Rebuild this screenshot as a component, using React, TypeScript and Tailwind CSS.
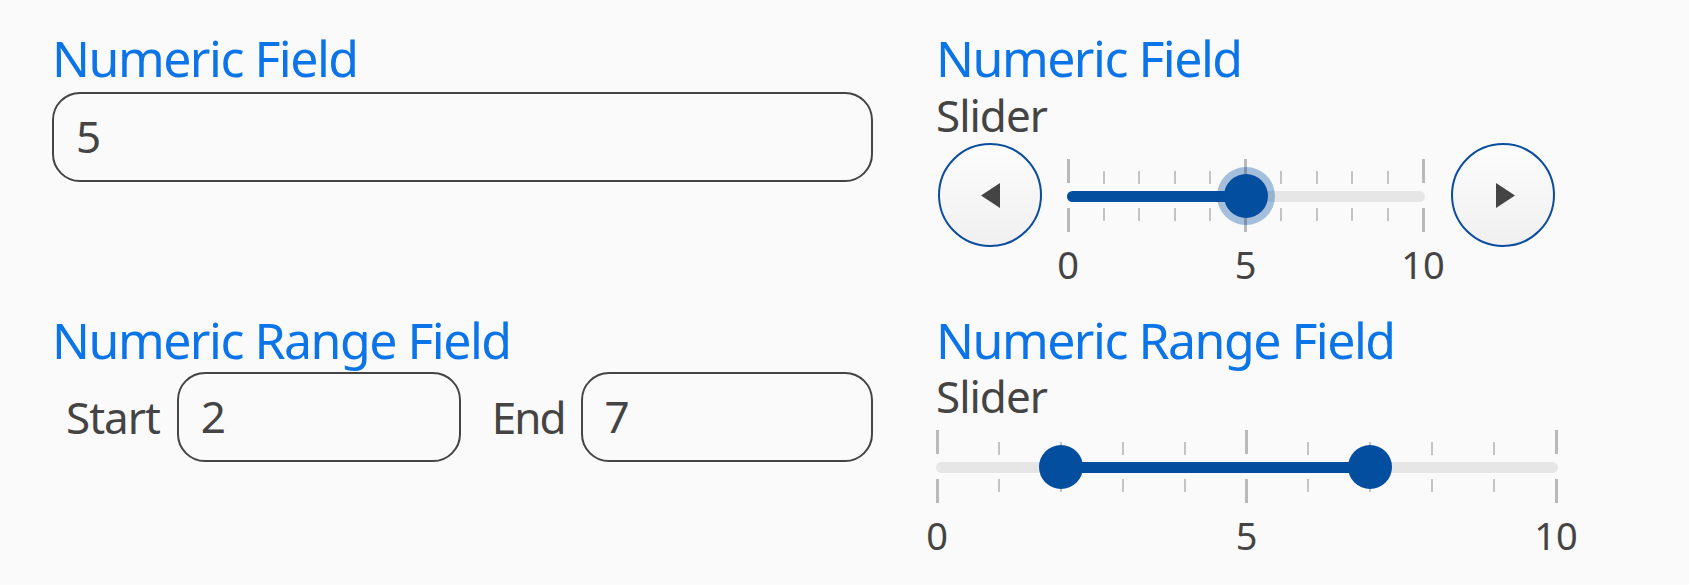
import React from "react";

const BLUE = "#044ea0";

function Ticks({ width, center }: { width: number; center: number }) {
  const items = [];
  for (let i = 0; i <= 10; i++) {
    const major = i % 5 === 0;
    const x = (width * i) / 10;
    const cls = major
      ? "absolute w-[3px] h-[24px] bg-[#b9b9b9]"
      : "absolute w-[2px] h-[13px] bg-[#c4c4c4]";
    const off = major ? 1.5 : 1;
    items.push(
      <React.Fragment key={i}>
        <div className={cls} style={{ left: x - off, top: major ? center - 37 : center - 25 }} />
        <div className={cls} style={{ left: x - off, top: center + 12 }} />
      </React.Fragment>
    );
  }
  return <>{items}</>;
}

function TickLabels({ className }: { className: string }) {
  return (
    <div
      className={
        "flex justify-between -mx-[30px] text-[38px] leading-[44px] text-[#444] " + className
      }
    >
      <span className="w-[60px] text-center">0</span>
      <span className="w-[60px] text-center">5</span>
      <span className="w-[60px] text-center">10</span>
    </div>
  );
}

function Slider({
  width,
  height,
  center,
  values,
  halo,
  labelOffset,
}: {
  width: number;
  height: number;
  center: number;
  values: number[];
  halo?: boolean;
  labelOffset: string;
}) {
  const pos = values.map((v) => (width * v) / 10);
  const fillLeft = values.length === 1 ? -1 : pos[0];
  const fillRight = values.length === 1 ? pos[0] : pos[1];
  return (
    <div className="flex flex-col" style={{ width }}>
      <div className="relative" style={{ width, height }}>
        <Ticks width={width} center={center} />
        <div
          className="absolute h-[11px] rounded-full bg-[#e6e6e6]"
          style={{ left: -1, width: width + 3, top: center - 5.5 }}
        />
        <div
          className="absolute h-[11px] rounded-full"
          style={{
            left: fillLeft,
            width: fillRight - fillLeft,
            top: center - 5.5,
            backgroundColor: BLUE,
          }}
        />
        {pos.map((p, i) => (
          <React.Fragment key={i}>
            {halo && (
              <div
                className="absolute w-[58px] h-[58px] rounded-full bg-[#044ea0]/35"
                style={{ left: p - 29, top: center - 29 }}
              />
            )}
            <div
              className="absolute w-[44px] h-[44px] rounded-full bg-[#044ea0]"
              style={{ left: p - 22, top: center - 22 }}
            />
          </React.Fragment>
        ))}
      </div>
      <TickLabels className={labelOffset} />
    </div>
  );
}

function ArrowButton({ dir }: { dir: "left" | "right" }) {
  return (
    <div className="w-[104px] h-[104px] rounded-full border-2 border-[#0a4c9e] bg-gradient-to-b from-[#fcfcfc] to-[#f0f0f0] flex items-center justify-center shrink-0">
      <svg
        width="20"
        height="25"
        viewBox="0 0 20 25"
        className={dir === "left" ? "ml-[2px]" : "ml-[6px]"}
      >
        {dir === "left" ? (
          <polygon points="19,0 19,25 0,12.5" fill="#444" />
        ) : (
          <polygon points="0,0 0,25 19,12.5" fill="#444" />
        )}
      </svg>
    </div>
  );
}

function Label({ children }: { children: React.ReactNode }) {
  return (
    <div className="text-[50px] leading-[60px] tracking-[-1.5px] text-[#0b74e8] whitespace-nowrap">
      {children}
    </div>
  );
}

function Box({ value, className }: { value: string; className: string }) {
  return (
    <div
      className={
        "h-[90px] rounded-[28px] border-2 border-[#444] flex items-center pl-[22px] text-[44px] text-[#444] " +
        className
      }
    >
      <span className="leading-[60px] -mt-[2px]">{value}</span>
    </div>
  );
}

export default function App() {
  return (
    <div className="w-[1689px] h-[585px] bg-[#fafafa] font-['Noto_Sans',sans-serif] text-[#444] pt-[28px] pl-[52px] grid grid-cols-[821px_621px] grid-rows-[282px_auto] gap-x-[63px]">
      {/* Row 1 left */}
      <div className="flex flex-col">
        <Label>Numeric Field</Label>
        <Box value="5" className="mt-[4px] w-[821px]" />
      </div>
      {/* Row 1 right */}
      <div className="flex flex-col">
        <Label>Numeric Field</Label>
        <div className="mt-[2px] text-[44px] leading-[50px] tracking-[-1px]">Slider</div>
        <div className="mt-[3px] flex items-start ml-[2px]">
          <ArrowButton dir="left" />
          <div className="ml-[26px] mr-[28px]">
            <Slider
              width={355}
              height={104}
              center={53}
              values={[5]}
              halo
              labelOffset="-mt-[5px]"
            />
          </div>
          <ArrowButton dir="right" />
        </div>
      </div>
      {/* Row 2 left */}
      <div className="flex flex-col">
        <Label>Numeric Range Field</Label>
        <div className="mt-[2px] flex items-center text-[44px]">
          <span className="ml-[14px] mr-[17px] tracking-[-1px] leading-[50px]">Start</span>
          <Box value="2" className="w-[284px]" />
          <span className="ml-[31px] mr-[16px] tracking-[-2px] leading-[50px]">End</span>
          <Box value="7" className="flex-1" />
        </div>
      </div>
      {/* Row 2 right */}
      <div className="flex flex-col">
        <Label>Numeric Range Field</Label>
        <div className="mt-[1px] text-[44px] leading-[50px] tracking-[-1px]">Slider</div>
        <div className="ml-[1px]">
          <Slider width={619} height={92} center={46} values={[2, 7]} labelOffset="" />
        </div>
      </div>
    </div>
  );
}
